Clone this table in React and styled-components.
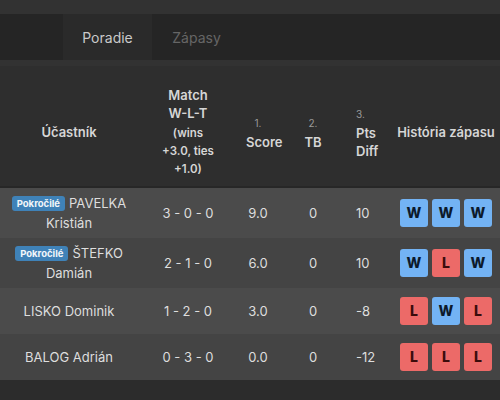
import React from 'react';
import styled, { createGlobalStyle } from 'styled-components';

const GlobalStyle = createGlobalStyle`
  body {
    margin: 0;
    background: #2c2c2c;
    font-family: Inter, "Liberation Sans", sans-serif;
    -webkit-font-smoothing: antialiased;
  }
`;

const Page = styled.div`
  width: 500px;
  height: 400px;
  overflow: hidden;
  background: #2c2c2c;
`;

const TopStrip = styled.div`
  height: ${p => p.h}px;
  background: #323232;
`;

const TabBar = styled.div`
  display: flex;
  height: 46px;
  padding-left: 63px;
  background: #252525;
`;

const Tab = styled.div`
  width: 89px;
  display: flex;
  align-items: center;
  justify-content: center;
  font-size: 14px;
  color: ${p => (p.active ? '#c9c9c9' : '#666666')};
  background: ${p => (p.active ? '#2a2a2a' : 'transparent')};
`;

const Grid = styled.div`
  display: grid;
  grid-template-columns: 138px 100px 40px 70px 24px 1fr;
  align-items: center;
  text-align: center;
`;

const HeaderRow = styled(Grid)`
  box-sizing: border-box;
  height: 122px;
  padding-top: 12px;
  background: #2e2e2e;
  border-bottom: 2px solid #272727;
  color: #d6d6d6;
  font-weight: 600;
  font-size: 13px;
  line-height: 18px;
`;

const Small = styled.div`
  font-size: 11.5px;
  line-height: 18px;
  margin-top: 2px;
`;

const Rank = styled.div`
  font-size: 10px;
  font-weight: 400;
  color: #9a9a9a;
  line-height: 19px;
`;

const Row = styled(Grid)`
  min-height: 46px;
  background: ${p => (p.alt ? '#444444' : '#4b4b4b')};
  color: #dedede;
  font-size: 13px;
  line-height: 20px;
`;

const Cell = styled.div`
  padding: 5px 8px;
  white-space: ${p => (p.nowrap ? 'nowrap' : 'normal')};
  ${p => p.push && `padding-left: ${p.push}px; padding-right: 0;`}
`;

const Level = styled.span`
  display: inline-block;
  background: #3f82b8;
  color: #f2f6fa;
  font-size: 9.5px;
  font-weight: 700;
  line-height: 15px;
  padding: 0 5px;
  border-radius: 3px;
  vertical-align: 1px;
  margin-right: 4px;
`;

const History = styled.div`
  display: flex;
  gap: 4px;
  justify-content: center;
`;

const Result = styled.div`
  width: 28px;
  height: 28px;
  border-radius: 3px;
  display: flex;
  align-items: center;
  justify-content: center;
  font-size: 14px;
  font-weight: 800;
  background: ${p => (p.win ? '#73b3f4' : '#ec6a68')};
  color: ${p => (p.win ? '#0c1a2c' : '#3a0c0c')};
`;

const players = [
  { level: true, last: 'PAVELKA', first: 'Kristián', wlt: '3 - 0 - 0', score: '9.0', tb: '0', diff: '10', hist: 'WWW' },
  { level: true, last: 'ŠTEFKO', first: 'Damián', wlt: '2 - 1 - 0', score: '6.0', tb: '0', diff: '10', hist: 'WLW' },
  { level: false, last: 'LISKO', first: 'Dominik', wlt: '1 - 2 - 0', score: '3.0', tb: '0', diff: '-8', hist: 'LWL' },
  { level: false, last: 'BALOG', first: 'Adrián', wlt: '0 - 3 - 0', score: '0.0', tb: '0', diff: '-12', hist: 'LLL' },
];

const App = () => (
  <Page>
    <GlobalStyle />
    <TopStrip h={14} />
    <TabBar>
      <Tab active>Poradie</Tab>
      <Tab>Zápasy</Tab>
    </TabBar>
    <TopStrip h={6} />
    <HeaderRow>
      <Cell>Účastník</Cell>
      <Cell>
        Match
        <br />
        W-L-T
        <Small>
          (wins
          <br />
          +3.0, ties
          <br />
          +1.0)
        </Small>
      </Cell>
      <Cell>
        <Rank>1.</Rank>
        Score
      </Cell>
      <Cell>
        <Rank>2.</Rank>
        TB
      </Cell>
      <Cell>
        <Rank>3.</Rank>
        Pts
        <br />
        Diff
      </Cell>
      <Cell push={20} nowrap>
        História zápasu
      </Cell>
    </HeaderRow>
    {players.map((p, i) => (
      <Row key={p.last} alt={i % 2 === 1}>
        <Cell>
          {p.level && <Level>Pokročilé</Level>}
          <span>{p.last}</span> <span>{p.first}</span>
        </Cell>
        <Cell>{p.wlt}</Cell>
        <Cell>{p.score}</Cell>
        <Cell>{p.tb}</Cell>
        <Cell>{p.diff}</Cell>
        <Cell push={20}>
          <History>
            {[...p.hist].map((r, j) => (
              <Result key={j} win={r === 'W'}>
                {r}
              </Result>
            ))}
          </History>
        </Cell>
      </Row>
    ))}
  </Page>
);

export default App;
